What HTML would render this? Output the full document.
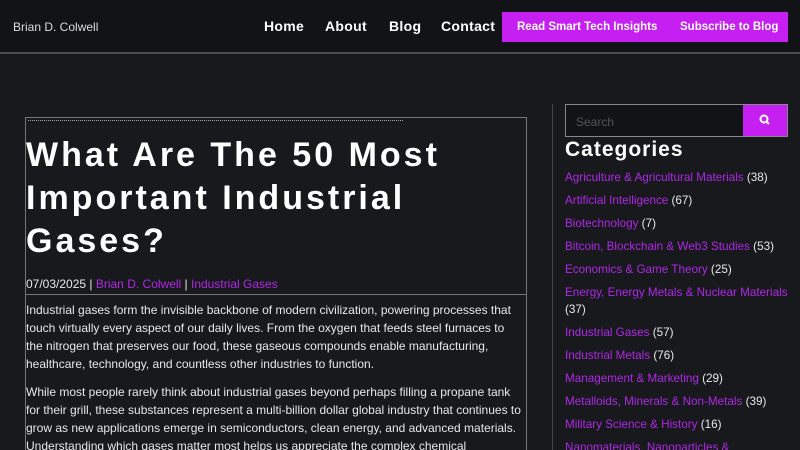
<!DOCTYPE html>
<html><head><meta charset="utf-8"><style>
*{margin:0;padding:0;box-sizing:border-box}
html,body{width:800px;height:450px;overflow:hidden}
body{position:relative;background:#17191d;font-family:"Liberation Sans",sans-serif;color:#e8e8e8}
.hdr{position:absolute;left:0;top:0;width:800px;height:54px;background:#111317;border-bottom:2px solid #4a4c50}
.brand{position:absolute;left:13px;top:20px;font-size:12px;color:#ddd}
.nav{position:absolute;top:18px;font-size:14px;color:#fff;font-weight:bold;letter-spacing:.3px}
.btn{position:absolute;left:502px;top:12px;width:286px;height:30px;background:#c61ff2;font-size:11.5px;font-weight:bold;color:#fff}
.btn span{position:absolute;top:9px}
.box{position:absolute;left:25px;top:117px;width:502px;height:333px;border:1px solid #777;border-bottom:none}
.tiny{position:absolute;left:28px;top:120px;width:375px;height:2px;border-top:1px dotted #aaa}
h1{position:absolute;left:26px;top:134px;font-size:34px;line-height:43px;font-weight:bold;letter-spacing:3px;color:#fff;width:470px}
.meta{position:absolute;left:26px;top:277px;font-size:12px}
.meta a,.side a{color:#b028e6;text-decoration:none}
.hr{position:absolute;left:25px;top:294px;width:502px;border-top:1px solid #777}
.txt{position:absolute;left:26px;top:301px;width:498px;height:149px;overflow:hidden;font-size:12px;line-height:18px}
.txt p{margin-bottom:10px}
.vl{position:absolute;left:552px;top:104px;height:346px;border-left:1px solid #444}
.srch{position:absolute;left:565px;top:104px;width:223px;height:33px;border:1px solid #888;background:#111317}
.srch span{position:absolute;left:10px;top:10px;font-size:12px;color:#555}
.sb{position:absolute;right:0;top:0;width:44px;height:31px;background:#c61ff2}
h2{position:absolute;left:565px;top:138px;font-size:21px;font-weight:bold;letter-spacing:1px;color:#fff}
.side{position:absolute;left:565px;top:169px;width:230px;height:281px;overflow:hidden;font-size:11.7px;line-height:17px}
.side div{margin-bottom:6px}
</style></head><body>
<div class="hdr">
<div class="brand">Brian D. Colwell</div>
<div class="nav" style="left:264px">Home</div>
<div class="nav" style="left:325px">About</div>
<div class="nav" style="left:389px">Blog</div>
<div class="nav" style="left:441px">Contact</div>
<div class="btn"><span style="left:15px">Read Smart Tech Insights</span><span style="left:178px">Subscribe to Blog</span></div>
</div>
<div class="box"></div><div class="tiny"></div>
<h1>What Are The 50 Most Important Industrial Gases?</h1>
<div class="meta">07/03/2025 | <a>Brian D. Colwell</a> | <a>Industrial Gases</a></div>
<div class="hr"></div>
<div class="txt"><p>Industrial gases form the invisible backbone of modern civilization, powering processes that touch virtually every aspect of our daily lives. From the oxygen that feeds steel furnaces to the nitrogen that preserves our food, these gaseous compounds enable manufacturing, healthcare, technology, and countless other industries to function.</p><p>While most people rarely think about industrial gases beyond perhaps filling a propane tank for their grill, these substances represent a multi-billion dollar global industry that continues to grow as new applications emerge in semiconductors, clean energy, and advanced materials. Understanding which gases matter most helps us appreciate the complex chemical</p></div>
<div class="vl"></div>
<div class="srch"><span>Search</span><div class="sb"><svg width="44" height="31" viewBox="0 0 44 31"><circle cx="21" cy="14" r="3.5" fill="none" stroke="#fff" stroke-width="2"/><line x1="23.5" y1="16.5" x2="26" y2="19" stroke="#fff" stroke-width="2.2"/></svg></div></div>
<h2>Categories</h2>
<div class="side">
<div><a>Agriculture &amp; Agricultural Materials</a> (38)</div>
<div><a>Artificial Intelligence</a> (67)</div>
<div><a>Biotechnology</a> (7)</div>
<div><a>Bitcoin, Blockchain &amp; Web3 Studies</a> (53)</div>
<div><a>Economics &amp; Game Theory</a> (25)</div>
<div><a>Energy, Energy Metals &amp; Nuclear Materials</a> (37)</div>
<div><a>Industrial Gases</a> (57)</div>
<div><a>Industrial Metals</a> (76)</div>
<div><a>Management &amp; Marketing</a> (29)</div>
<div><a>Metalloids, Minerals &amp; Non-Metals</a> (39)</div>
<div><a>Military Science &amp; History</a> (16)</div>
<div><a>Nanomaterials, Nanoparticles &amp;</a></div>
</div>
</body></html>
